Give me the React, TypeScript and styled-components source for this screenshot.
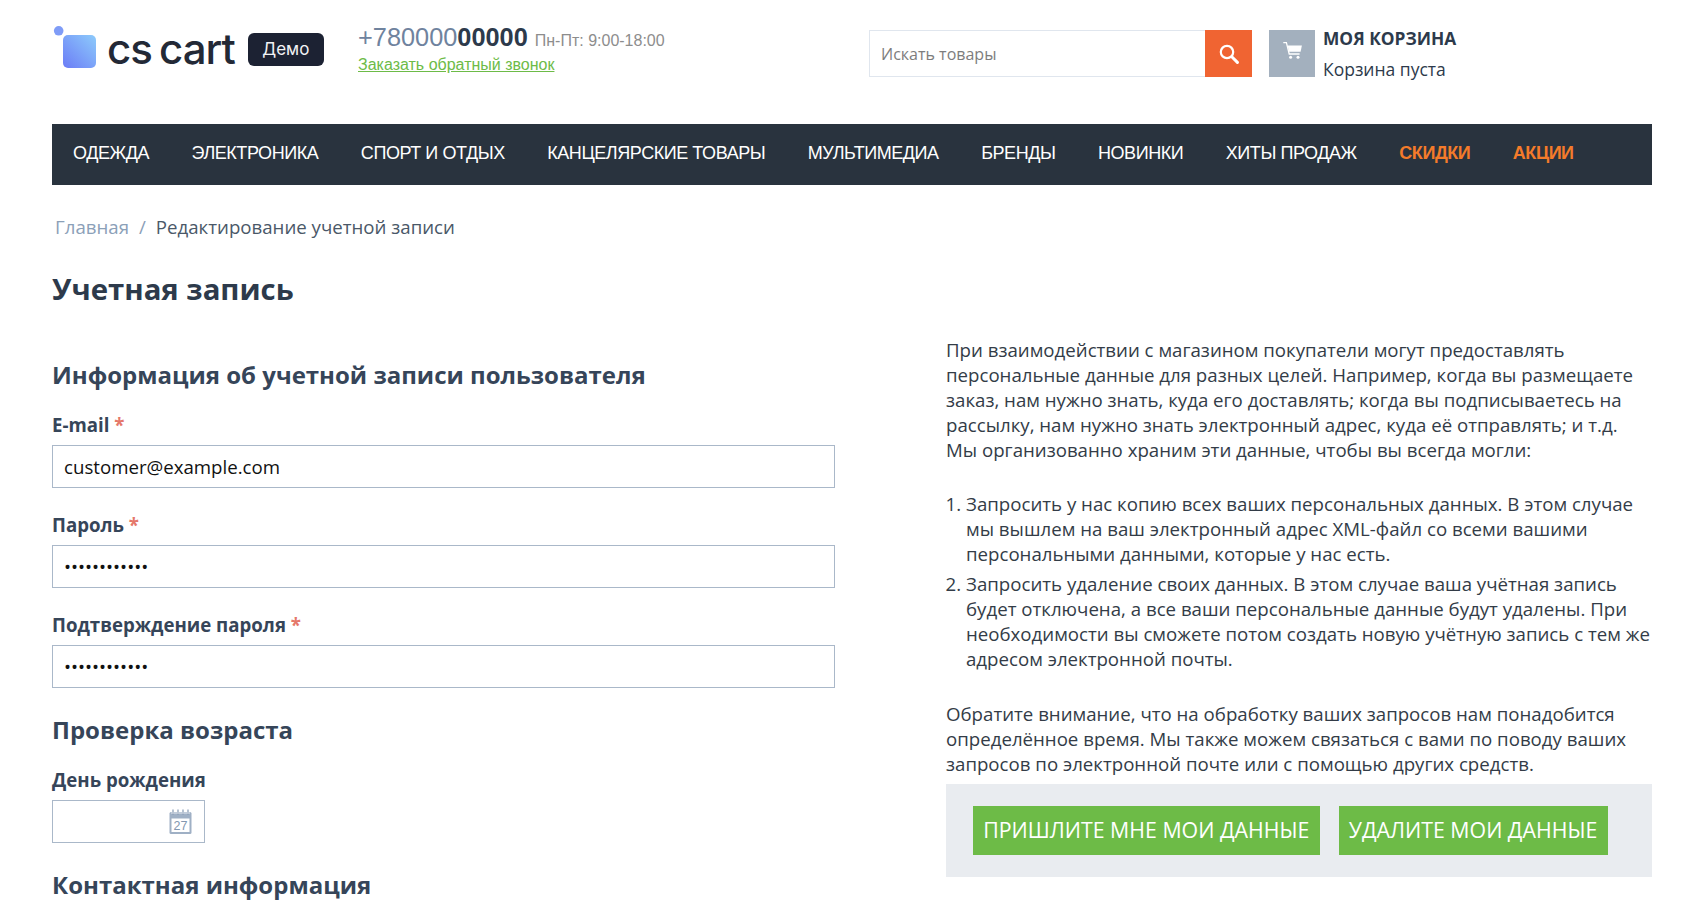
import React from 'react';
import styled, { createGlobalStyle } from 'styled-components';

const GlobalStyle = createGlobalStyle`
  html, body {
    margin: 0;
    padding: 0;
    background: #fff;
    overflow: hidden;
  }
  * {
    box-sizing: border-box;
  }
`;

const menuItems = [
  'ОДЕЖДА',
  'ЭЛЕКТРОНИКА',
  'СПОРТ И ОТДЫХ',
  'КАНЦЕЛЯРСКИЕ ТОВАРЫ',
  'МУЛЬТИМЕДИА',
  'БРЕНДЫ',
  'НОВИНКИ',
  'ХИТЫ ПРОДАЖ',
];

const App: React.FC = () => {
  return (
    <Page>
      <GlobalStyle />
      <Header>
        <Logo>
          <LogoMark viewBox="0 0 46 46" width="46" height="46">
            <defs>
              <linearGradient id="logoGrad" x1="0" y1="1" x2="1" y2="0">
                <stop offset="0" stopColor="#6b7cf6" />
                <stop offset="1" stopColor="#8dcbfb" />
              </linearGradient>
            </defs>
            <circle cx="5.7" cy="4.8" r="4.8" fill="#7f9cf7" />
            <rect x="10" y="9" width="33" height="33" rx="5" fill="url(#logoGrad)" />
          </LogoMark>
          <LogoText>cs cart</LogoText>
          <DemoBadge>Демо</DemoBadge>
        </Logo>
        <Contacts>
          <PhoneRow>
            <Phone>+780000<b>00000</b></Phone>
            <Hours>Пн-Пт: 9:00-18:00</Hours>
          </PhoneRow>
          <CallbackLink href="#">Заказать обратный звонок</CallbackLink>
        </Contacts>
        <Search>
          <SearchInput placeholder="Искать товары" />
          <SearchButton>
            <svg viewBox="0 0 20 20" width="20" height="20" fill="none" stroke="#fff">
              <circle cx="8" cy="8" r="6.2" strokeWidth="2.2" />
              <path d="M12.8 12.8 L18.4 18.4" strokeWidth="3" strokeLinecap="round" />
            </svg>
          </SearchButton>
        </Search>
        <Cart>
          <CartIcon>
            <CartGlyph viewBox="0 0 19 17" width="19" height="17" fill="#fff">
              <path d="M0.3 0.7 H3.4 L6.2 12 H16.6" fill="none" stroke="#fff" strokeWidth="1.3" />
              <path d="M4.6 3.4 H18.9 L17.6 9.8 H6.1 Z" />
              <circle cx="7.6" cy="15.3" r="1.5" />
              <circle cx="15" cy="15.3" r="1.5" />
            </CartGlyph>
          </CartIcon>
          <CartInfo>
            <CartTitle>МОЯ КОРЗИНА</CartTitle>
            <CartEmpty>Корзина пуста</CartEmpty>
          </CartInfo>
        </Cart>
      </Header>

      <Menu>
        {menuItems.map((item) => (
          <MenuItem key={item}>{item}</MenuItem>
        ))}
        <MenuItem $accent>СКИДКИ</MenuItem>
        <MenuItem $accent>АКЦИИ</MenuItem>
      </Menu>

      <Breadcrumbs>
        <Crumb href="#">Главная</Crumb>
        <CrumbSlash>/</CrumbSlash>
        <span>Редактирование учетной записи</span>
      </Breadcrumbs>

      <PageTitle>Учетная запись</PageTitle>

      <Columns>
        <FormColumn>
          <SectionTitle>Информация об учетной записи пользователя</SectionTitle>
          <Field>
            <Label>E-mail <Required>*</Required></Label>
            <Input defaultValue="customer@example.com" />
          </Field>
          <Field>
            <Label>Пароль <Required>*</Required></Label>
            <Input type="password" defaultValue="************" />
          </Field>
          <Field>
            <Label>Подтверждение пароля <Required>*</Required></Label>
            <Input type="password" defaultValue="************" />
          </Field>
          <AgeTitle>Проверка возраста</AgeTitle>
          <Field>
            <Label>День рождения</Label>
            <DateBox>
              <svg viewBox="0 0 23 25" width="23" height="25">
                <rect x="0.5" y="3" width="22" height="22" rx="1.5" fill="#9fb0c5" />
                <rect x="2.5" y="9.5" width="18" height="13.5" fill="#fff" />
                <path d="M4 0.5 V6 M9 0.5 V6 M14 0.5 V6 M19 0.5 V6" stroke="#8ea1b9" strokeWidth="1.3" />
                <path d="M2 4 H21" stroke="#fff" strokeWidth="1.2" opacity="0.6" />
                <text x="11.5" y="21" fontSize="12.5" textAnchor="middle" fill="#8297b0" fontFamily="'Liberation Sans', sans-serif">27</text>
              </svg>
            </DateBox>
          </Field>
          <ContactTitle>Контактная информация</ContactTitle>
        </FormColumn>

        <InfoColumn>
          <Paragraph>
            При взаимодействии с магазином покупатели могут предоставлять персональные данные для разных целей. Например, когда вы размещаете заказ, нам нужно знать, куда его доставлять; когда вы подписываетесь на рассылку, нам нужно знать электронный адрес, куда её отправлять; и т.д.
            <br />
            Мы организованно храним эти данные, чтобы вы всегда могли:
          </Paragraph>
          <Steps>
            <li>Запросить у нас копию всех ваших персональных данных. В этом случае мы вышлем на ваш электронный адрес XML-файл со всеми вашими персональными данными, которые у нас есть.</li>
            <li>Запросить удаление своих данных. В этом случае ваша учётная запись будет отключена, а все ваши персональные данные будут удалены. При необходимости вы сможете потом создать новую учётную запись с тем же адресом электронной почты.</li>
          </Steps>
          <Paragraph>
            Обратите внимание, что на обработку ваших запросов нам понадобится определённое время. Мы также можем связаться с вами по поводу ваших запросов по электронной почте или с помощью других средств.
          </Paragraph>
          <ActionPanel>
            <ActionButton>ПРИШЛИТЕ МНЕ МОИ ДАННЫЕ</ActionButton>
            <ActionButton>УДАЛИТЕ МОИ ДАННЫЕ</ActionButton>
          </ActionPanel>
        </InfoColumn>
      </Columns>
    </Page>
  );
};

export default App;

const Page = styled.div`
  height: 918px;
  overflow: hidden;
  padding: 0 38px 0 52px;
  font-family: 'Open Sans', sans-serif;
  color: #2d3a4b;
`;

const Header = styled.header`
  display: flex;
  align-items: flex-start;
  height: 124px;
  padding-top: 24px;
`;

const Logo = styled.div`
  display: flex;
  align-items: flex-start;
  width: 306px;
`;

const LogoMark = styled.svg`
  flex: none;
  margin: 2px 0 0 1px;
`;

const LogoText = styled.span`
  margin: 1px 0 0 8px;
  font-family: Inter, sans-serif;
  font-size: 42px;
  line-height: 48px;
  font-weight: 500;
  letter-spacing: -1px;
  word-spacing: -3px;
  white-space: nowrap;
  color: #232936;
`;

const DemoBadge = styled.span`
  flex: none;
  margin: 9px 0 0 13px;
  width: 76px;
  height: 33px;
  border-radius: 6px;
  background: #1c2233;
  color: #f2f3f5;
  font-family: Inter, sans-serif;
  font-size: 17px;
  line-height: 33px;
  text-align: center;
`;

const Contacts = styled.div`
  width: 511px;
  font-family: 'Liberation Sans', sans-serif;
`;

const PhoneRow = styled.div`
  display: flex;
  align-items: baseline;
  gap: 7px;
  margin-top: -1px;
`;

const Phone = styled.span`
  font-size: 25.33px;
  line-height: 28px;
  color: #6f839e;

  b {
    color: #2d3a4b;
  }
`;

const Hours = styled.span`
  font-size: 16px;
  color: #8d8d8d;
`;

const CallbackLink = styled.a`
  display: block;
  margin-top: 5px;
  font-size: 16px;
  line-height: 18px;
  color: #6dbb47;
`;

const Search = styled.div`
  display: flex;
  margin-top: 6px;
  width: 383px;
  height: 47px;
`;

const SearchInput = styled.input`
  flex: 1;
  min-width: 0;
  padding: 0 11px;
  border: 1px solid #e0e6ee;
  border-right: 0;
  outline: none;
  font-family: 'Open Sans', sans-serif;
  font-size: 16px;

  &::placeholder {
    color: #7d7d7d;
    opacity: 1;
  }
`;

const SearchButton = styled.button`
  display: flex;
  align-items: center;
  justify-content: center;
  width: 47px;
  padding: 0;
  border: 0;
  background: #f06432;
`;

const Cart = styled.div`
  display: flex;
  margin: 6px 0 0 17px;
`;

const CartIcon = styled.div`
  display: flex;
  align-items: center;
  justify-content: center;
  width: 46px;
  height: 47px;
  background: #a3b0be;
`;

const CartGlyph = styled.svg`
  margin-bottom: 6px;
`;

const CartInfo = styled.div`
  margin: -5px 0 0 8px;
`;

const CartTitle = styled.div`
  font-size: 17.33px;
  line-height: 26px;
  font-weight: 700;
  color: #2d3a4b;
`;

const CartEmpty = styled.div`
  margin-top: 6px;
  font-size: 17.5px;
  line-height: 24px;
  color: #2d3a4b;
`;

const Menu = styled.nav`
  display: flex;
  align-items: center;
  gap: 42.5px;
  height: 61px;
  padding: 0 21px 3px;
  background: #29333e;
`;

const MenuItem = styled.a<{ $accent?: boolean }>`
  font-family: 'Liberation Sans', sans-serif;
  font-size: 18px;
  font-weight: ${({ $accent }) => ($accent ? 700 : 400)};
  letter-spacing: -0.44px;
  color: ${({ $accent }) => ($accent ? '#f47b2a' : '#fff')};
`;

const Breadcrumbs = styled.div`
  display: flex;
  gap: 10px;
  padding: 29px 0 0 3px;
  font-size: 18.67px;
  line-height: 26px;
  color: #4a5868;
`;

const Crumb = styled.a`
  color: #8ba0b8;
  text-decoration: none;
`;

const CrumbSlash = styled.span`
  color: #8ba0b8;
`;

const PageTitle = styled.h1`
  margin: 30px 0 0;
  font-size: 29.33px;
  line-height: 38px;
  font-weight: 700;
  color: #2d3a4b;
`;

const Columns = styled.div`
  display: grid;
  grid-template-columns: 783px 706px;
  justify-content: space-between;
  margin-top: 29px;
`;

const FormColumn = styled.div`
  padding-top: 21px;
`;

const SectionTitle = styled.h2`
  margin: 0 0 21px;
  font-size: 24px;
  line-height: 34px;
  font-weight: 700;
  color: #364559;
`;

const AgeTitle = styled(SectionTitle)`
  margin-top: 25px;
`;

const ContactTitle = styled(SectionTitle)`
  margin: 0;
`;

const Field = styled.div`
  margin-bottom: 25px;
`;

const Label = styled.label`
  display: block;
  margin-bottom: 8px;
  font-size: 18.67px;
  line-height: 24px;
  font-weight: 700;
  color: #364559;
`;

const Required = styled.span`
  color: #e5786a;
`;

const Input = styled.input`
  display: block;
  width: 100%;
  height: 43px;
  padding: 0 11px;
  border: 1px solid #aab8c9;
  outline: none;
  font-family: 'Open Sans', sans-serif;
  font-size: 18.67px;
  color: #111;
`;

const DateBox = styled.div`
  display: flex;
  align-items: center;
  justify-content: flex-end;
  width: 153px;
  height: 43px;
  padding-right: 12px;
  border: 1px solid #aab8c9;
`;

const InfoColumn = styled.div`
  font-size: 18.67px;
  line-height: 25px;
  color: #333c47;
`;

const Paragraph = styled.p`
  margin: 0;
`;

const Steps = styled.ol`
  margin: 29px 0 30px;
  padding: 0 0 0 20px;

  li + li {
    margin-top: 5px;
  }
`;

const ActionPanel = styled.div`
  display: flex;
  gap: 19px;
  margin-top: 8px;
  padding: 22px 27px;
  background: #e9ecf0;
`;

const ActionButton = styled.button`
  height: 49px;
  padding: 0 10.2px 2px;
  border: 0;
  background: #6dbb47;
  color: #fff;
  font-family: 'Open Sans', sans-serif;
  font-size: 21.33px;
  white-space: nowrap;
`;
